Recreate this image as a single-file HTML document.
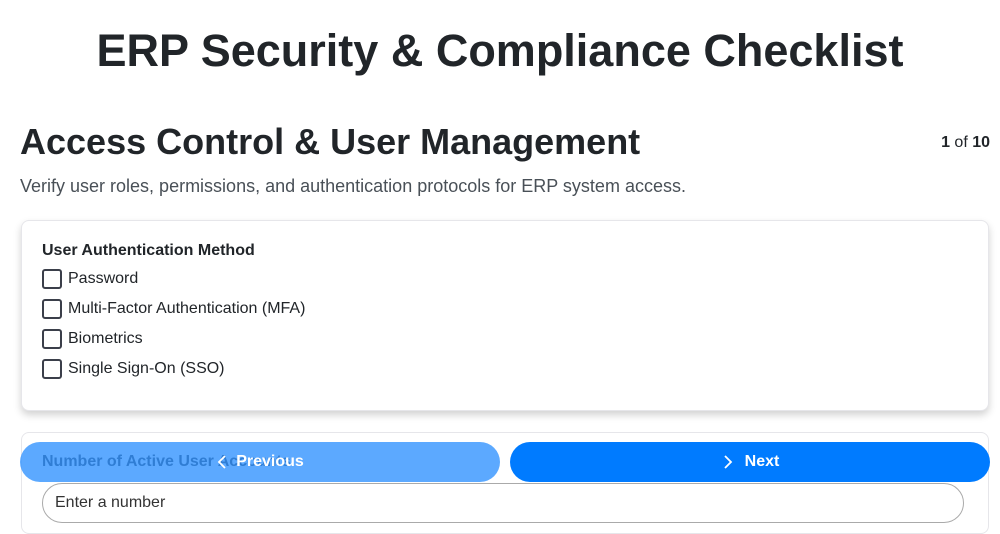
<!DOCTYPE html>
<html><head><meta charset="utf-8"><style>
body{margin:0;width:1000px;height:500px;overflow:hidden;background:#fff;font-family:"Liberation Sans",sans-serif;color:#212529;position:relative}
h1{margin:0;position:absolute;top:26px;left:0;width:1000px;text-align:center;font-size:45px;font-weight:700;line-height:50px}
h2{margin:0;position:absolute;top:121px;left:20px;font-size:36px;font-weight:700;line-height:42px}
.cnt{position:absolute;top:134px;right:10px;font-size:16px}
.sub{position:absolute;top:176px;left:20px;font-size:18px;color:#495057}
.card{position:absolute;left:21px;width:966px;background:#fff;border:1px solid #e6e6ea;border-radius:8px;box-shadow:0 4px 8px rgba(0,0,0,.18)}
.lbl{font-weight:700;font-size:16px;position:absolute;left:20px}
.opt{position:absolute;left:20px;font-size:16px;display:flex;align-items:center}
.opt i{display:inline-block;width:16px;height:16px;border:2px solid #3b3f4a;border-radius:3px;margin-right:6px}
.btn{position:absolute;top:442px;height:40px;border-radius:20px;color:#fff;font-weight:700;font-size:16px;display:flex;align-items:center;justify-content:center}
</style></head><body>
<h1>ERP Security &amp; Compliance Checklist</h1>
<h2>Access Control &amp; User Management</h2>
<div class="cnt"><b>1</b> of <b>10</b></div>
<div class="sub">Verify user roles, permissions, and authentication protocols for ERP system access.</div>
<div class="card" style="top:220px;height:189px">
<div class="lbl" style="top:21px">User Authentication Method</div>
<div class="opt" style="top:48px"><i></i>Password</div>
<div class="opt" style="top:78px"><i></i>Multi-Factor Authentication (MFA)</div>
<div class="opt" style="top:108px"><i></i>Biometrics</div>
<div class="opt" style="top:138px"><i></i>Single Sign-On (SSO)</div>
</div>
<div class="card" style="top:432px;height:100px;box-shadow:none">
<div class="lbl" style="top:20px">Number of Active User Accounts</div>
<div style="position:absolute;left:20px;top:50px;width:922px;height:40px;border:1px solid #aaa;border-radius:20px;font-size:16px;padding:10px 12px;box-sizing:border-box;color:#333">Enter a number</div>
</div>
<div class="btn" style="left:20px;width:480px;background:rgba(51,148,255,.8)"><svg width="14" height="16" viewBox="0 0 14 16" style="margin-right:6px"><path d="M9 2L3 8l6 6" stroke="#fff" stroke-width="1.8" fill="none"/></svg>Previous</div>
<div class="btn" style="left:510px;width:480px;background:#007bff"><svg width="14" height="16" viewBox="0 0 14 16" style="margin-right:10px"><path d="M4 2l6 6-6 6" stroke="#fff" stroke-width="1.8" fill="none"/></svg>Next</div>
</body></html>
